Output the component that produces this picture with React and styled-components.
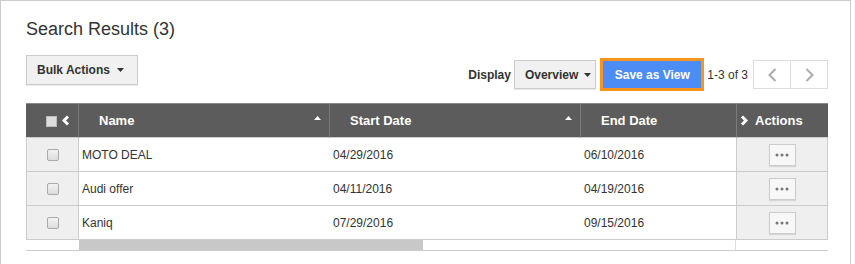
import React from "react";
import styled, { createGlobalStyle } from "styled-components";

const GlobalStyle = createGlobalStyle`
  html, body { margin: 0; padding: 0; background: #fff; }
  body { font-family: "Liberation Sans", Arial, sans-serif; color: #333; }
  *, *::before, *::after { box-sizing: border-box; }
`;

const Panel = styled.div`
  width: 851px;
  height: 264px;
  border: 1px solid #ccc;
  border-bottom: none;
  padding: 18px 22px 0 25px;
  overflow: hidden;
`;

const Title = styled.h2`
  margin: 0;
  font-size: 18px;
  font-weight: normal;
  line-height: 21px;
  color: #333;
`;

const Toolbar = styled.div`
  display: flex;
  justify-content: space-between;
  align-items: flex-start;
  margin-top: 15px;
  height: 36px;
`;

const GrayButton = styled.button`
  height: ${(p) => p.$h}px;
  display: inline-flex;
  align-items: center;
  gap: ${(p) => p.$gap}px;
  padding: 0 ${(p) => p.$pr}px 0 10px;
  border: 1px solid #ccc;
  background: #f1f1f1;
  color: #333;
  font-family: inherit;
  font-weight: bold;
  font-size: 12px;
  box-shadow: 0 1px 1px rgba(0, 0, 0, 0.08);
  cursor: pointer;
`;

const RightGroup = styled.div`
  display: flex;
  align-items: center;
  margin-top: 3px;
  height: 33px;
`;

const Label = styled.span`
  font-weight: bold;
  font-size: 12px;
  margin-right: 3px;
`;

const SaveButton = styled.button`
  margin-left: 4px;
  height: 33px;
  width: 104px;
  border: 3px solid #f7941d;
  background: #4b8df5;
  color: #fff;
  font-family: inherit;
  font-weight: bold;
  font-size: 12px;
  padding: 0;
  cursor: pointer;
`;

const PageInfo = styled.span`
  font-size: 12px;
  margin: 0 5px 0 3px;
`;

const Pager = styled.div`
  display: flex;
  height: 29px;
  border: 1px solid #ddd;
  background: #fff;
`;

const PagerButton = styled.div`
  width: ${(p) => (p.$first ? 36 : 37)}px;
  display: flex;
  align-items: center;
  justify-content: center;
  border-left: ${(p) => (p.$first ? "none" : "1px solid #ddd")};
`;

const Table = styled.div`
  margin-top: 12px;
  width: 802px;
  display: flex;
  border-bottom: 1px solid #ccc;
`;

const Pane = styled.div`
  width: ${(p) => p.$w}px;
  display: flex;
  flex-direction: column;
`;

const HeadRow = styled.div`
  display: flex;
`;

const HeadCell = styled.div`
  width: ${(p) => p.$w}px;
  height: 35px;
  display: flex;
  align-items: center;
  justify-content: ${(p) => (p.$sort ? "space-between" : "flex-start")};
  gap: ${(p) => p.$gap || 0}px;
  padding: 0 8px 0 ${(p) => p.$pl}px;
  background: #5c5c5c;
  border-top: 1px solid #888;
  border-bottom: 1px solid #ccc;
  border-right: ${(p) => (p.$right ? "1px solid #7b7b7b" : "none")};
  border-left: ${(p) => (p.$left ? "1px solid #7b7b7b" : "none")};
  color: #fff;
  font-weight: bold;
  font-size: 13px;
  white-space: nowrap;
`;

const SortUp = styled.svg`
  margin-bottom: 5px;
`;

const SideCell = styled.div`
  height: 34px;
  display: flex;
  align-items: center;
  justify-content: center;
  background: #efefef;
  border: 1px solid #ccc;
  border-top: none;
`;

const Row = styled.div`
  display: flex;
  height: 34px;
  border-bottom: 1px solid #ccc;
  background: #fff;
`;

const Cell = styled.div`
  width: ${(p) => p.$w}px;
  display: flex;
  align-items: center;
  padding-left: 3px;
  font-size: 12px;
  color: #333;
`;

const Checkbox = styled.span`
  width: 12px;
  height: 12px;
  border: 1px solid #aaa;
  border-radius: 2px;
  background: linear-gradient(#f2f2f2, #dcdcdc);
`;

const HeadCheckbox = styled.span`
  width: 11px;
  height: 11px;
  border: 1px solid #bbb;
  background: #ddd;
  margin-top: 1px;
`;

const ScrollFiller = styled.div`
  height: 10px;
  background: #fff;
`;

const ScrollTrack = styled.div`
  height: 10px;
  display: flex;
  border-right: 1px solid #ddd;
  background: #fff;
`;

const ScrollThumb = styled.div`
  width: 344px;
  background: #c8c8c8;
`;

const DotsButton = styled.div`
  width: 27px;
  height: 22px;
  display: flex;
  align-items: center;
  justify-content: center;
  background: #f7f7f7;
  border: 1px solid #ccc;
  box-shadow: 0 1px 1px rgba(0, 0, 0, 0.1);
`;

const Caret = () => (
  <svg width="7" height="4" viewBox="0 0 7 4">
    <polygon points="0,0 7,0 3.5,4" fill="#333" />
  </svg>
);

const Chevron = ({ dir, color, w, h, sw }) => (
  <svg width={w} height={h} viewBox={`0 0 ${w} ${h}`}>
    <polyline
      points={
        dir === "left"
          ? `${w - sw / 2 - 0.5},${sw / 2} ${sw / 2 + 0.5},${h / 2} ${w - sw / 2 - 0.5},${h - sw / 2}`
          : `${sw / 2 + 0.5},${sw / 2} ${w - sw / 2 - 0.5},${h / 2} ${sw / 2 + 0.5},${h - sw / 2}`
      }
      fill="none"
      stroke={color}
      strokeWidth={sw}
    />
  </svg>
);

const Sort = () => (
  <SortUp width="7" height="4" viewBox="0 0 7 4">
    <polygon points="0,4 3.5,0 7,4" fill="#fff" />
  </SortUp>
);

const Dots = () => (
  <svg width="14" height="4" viewBox="0 0 14 4">
    <circle cx="2" cy="2" r="1.5" fill="#777" />
    <circle cx="7" cy="2" r="1.5" fill="#777" />
    <circle cx="12" cy="2" r="1.5" fill="#777" />
  </svg>
);

const rows = [
  { name: "MOTO DEAL", start: "04/29/2016", end: "06/10/2016" },
  { name: "Audi offer", start: "04/11/2016", end: "04/19/2016" },
  { name: "Kaniq", start: "07/29/2016", end: "09/15/2016" },
];

export default function App() {
  return (
    <>
      <GlobalStyle />
      <Panel>
        <Title>Search Results (3)</Title>
        <Toolbar>
          <GrayButton $h={30} $gap={7} $pr={13}>
            Bulk Actions <Caret />
          </GrayButton>
          <RightGroup>
            <Label>Display</Label>
            <GrayButton $h={29} $gap={6} $pr={4}>
              Overview <Caret />
            </GrayButton>
            <SaveButton>Save as View</SaveButton>
            <PageInfo>1-3 of 3</PageInfo>
            <Pager>
              <PagerButton $first>
                <Chevron dir="left" color="#aaa" w={9} h={14} sw={2} />
              </PagerButton>
              <PagerButton>
                <Chevron dir="right" color="#aaa" w={9} h={14} sw={2} />
              </PagerButton>
            </Pager>
          </RightGroup>
        </Toolbar>
        <Table>
          <Pane $w={53}>
            <HeadCell $w={53} $pl={20} $gap={5} $right>
              <HeadCheckbox />
              <Chevron dir="left" color="#fff" w={8} h={11} sw={3} />
            </HeadCell>
            {rows.map((r) => (
              <SideCell key={r.name}>
                <Checkbox />
              </SideCell>
            ))}
            <ScrollFiller />
          </Pane>
          <Pane $w={657}>
            <HeadRow>
              <HeadCell $w={251} $pl={20} $sort $right>
                Name <Sort />
              </HeadCell>
              <HeadCell $w={251} $pl={20} $sort $right>
                Start Date <Sort />
              </HeadCell>
              <HeadCell $w={155} $pl={20}>
                End Date
              </HeadCell>
            </HeadRow>
            {rows.map((r) => (
              <Row key={r.name}>
                <Cell $w={251}>{r.name}</Cell>
                <Cell $w={251}>{r.start}</Cell>
                <Cell $w={155}>{r.end}</Cell>
              </Row>
            ))}
            <ScrollTrack>
              <ScrollThumb />
            </ScrollTrack>
          </Pane>
          <Pane $w={92}>
            <HeadCell $w={92} $pl={3} $gap={7} $left>
              <Chevron dir="right" color="#fff" w={8} h={11} sw={3} />
              Actions
            </HeadCell>
            {rows.map((r) => (
              <SideCell key={r.name}>
                <DotsButton>
                  <Dots />
                </DotsButton>
              </SideCell>
            ))}
            <ScrollFiller />
          </Pane>
        </Table>
      </Panel>
    </>
  );
}
